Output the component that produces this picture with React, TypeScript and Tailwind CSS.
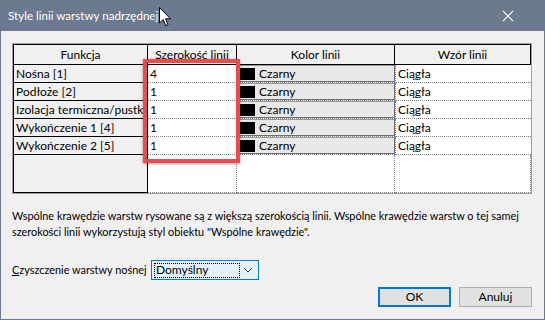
const rows = [
  { name: "Nośna [1]", width: "4" },
  { name: "Podłoże [2]", width: "1" },
  { name: "Izolacja termiczna/pustka [3]", width: "1" },
  { name: "Wykończenie 1 [4]", width: "1" },
  { name: "Wykończenie 2 [5]", width: "1" },
];

function CloseIcon() {
  return (
    <svg width="12" height="12" viewBox="0 0 12 12" className="block">
      <path d="M1 1 L11 11 M11 1 L1 11" stroke="#ffffff" strokeWidth="1.1" fill="none" />
    </svg>
  );
}

function Cursor() {
  return (
    <svg width="13" height="20" viewBox="0 0 13 20" className="absolute left-[158px] top-[7px]">
      <path
        d="M0.5 0.5 L0.5 16 L4.2 12.6 L6.8 18.6 L9 17.6 L6.5 11.8 L11.5 11.8 Z"
        fill="#ffffff"
        stroke="#000000"
        strokeWidth="1"
        strokeLinejoin="round"
      />
    </svg>
  );
}

function Chevron() {
  return (
    <svg width="10" height="6" viewBox="0 0 10 6" className="block">
      <path d="M1 1 L5 5 L9 1" stroke="#404040" strokeWidth="1" fill="none" />
    </svg>
  );
}

export default function App() {
  return (
    <div
      className="relative w-[545px] h-[320px] bg-[#f0f0f0] border border-[#6b7a8f] border-t-0 text-[12px] text-black flex flex-col overflow-hidden"
      style={{ fontFamily: 'Lato, "Liberation Sans", Arial, sans-serif' }}
    >
      {/* title bar */}
      <div className="h-[31px] bg-[#6b7a8f] flex items-center justify-between pl-[8px] pr-[31px] text-white text-[11.6px] -mx-px">
        <span>Style linii warstwy nadrzędnej</span>
        <CloseIcon />
      </div>
      <Cursor />

      <div className="flex flex-col px-[11px] pt-[12px]">
        {/* grid */}
        <div className="relative w-[520px] border border-[#a0a0a0] bg-white">
          <div className="grid grid-cols-[135px_89px_158px_136px]">
            <div className="h-[21px] bg-[#f0f0f0] border border-black flex items-center justify-center">Funkcja</div>
            <div className="h-[21px] bg-[#f0f0f0] border-y border-r border-black flex items-center justify-center">Szerokość linii</div>
            <div className="h-[21px] bg-[#f0f0f0] border-y border-r border-black flex items-center justify-center">Kolor linii</div>
            <div className="h-[21px] bg-[#f0f0f0] border-y border-r border-black flex items-center justify-center">Wzór linii</div>

            {rows.map((r) => (
              <div key={r.name} className="contents">
                <div className="h-[18px] bg-[#f0f0f0] border-x border-b border-black pl-[2px] flex items-center overflow-hidden whitespace-nowrap">
                  {r.name}
                </div>
                <div className="h-[18px] border-b border-dotted border-[#808080] pl-[2px] flex items-center">
                  {r.width}
                </div>
                <div className="h-[18px] border-b border-dotted border-[#808080] flex items-stretch">
                  <div className="flex-1 flex items-center gap-[4px] pl-[1px] bg-[#e8e8e8] border border-[#9a9a9a] border-b-[#6e6e6e] border-r-[#6e6e6e]">
                    <span className="w-[16px] h-[12px] bg-black" />
                    <span>Czarny</span>
                  </div>
                </div>
                <div className="h-[18px] border-b border-l border-dotted border-[#808080] pl-[2px] flex items-center">
                  Ciągła
                </div>
              </div>
            ))}

            <div className="h-[38px] bg-[#f0f0f0] border-x border-b border-black" />
            <div className="h-[38px] border-b border-r border-dotted border-[#808080]" />
            <div className="h-[38px] border-b border-r border-dotted border-[#808080]" />
            <div className="h-[38px] border-b border-r border-dotted border-[#808080]" />
          </div>

          {/* red highlight annotation */}
          <div className="absolute left-[130px] top-[15px] w-[97px] h-[104px] border-[4px] border-[#ee4a50] shadow-[0_1px_3px_rgba(0,0,0,0.35)] pointer-events-none" />
        </div>

        <p className="mt-[14px] leading-[16px] whitespace-nowrap text-[10.9px]">
          Wspólne krawędzie warstw rysowane są z większą szerokością linii. Wspólne krawędzie warstw o tej samej
          <br />
          szerokości linii wykorzystują styl obiektu "Wspólne krawędzie".
        </p>

        <div className="mt-[20px] flex items-center">
          <span className="w-[139px] whitespace-nowrap text-[10.9px]">
            <span className="underline">C</span>zyszczenie warstwy nośnej
          </span>
          <div className="w-[108px] h-[20px] border border-[#0078d7] bg-[#e5f1fb] flex items-center pl-[2px] pr-[5px]">
            <div className="w-[86px] h-[15px] border border-dotted border-black flex items-center pl-[1px]">
              Domyślny
            </div>
            <div className="flex-1 flex justify-end">
              <Chevron />
            </div>
          </div>
        </div>

        <div className="mt-[7px] flex justify-end gap-[8px] pr-[1px]">
          <button className="w-[73px] h-[20px] border-2 border-[#0078d7] bg-[#e1e1e1] flex items-center justify-center">
            OK
          </button>
          <button className="w-[73px] h-[20px] border border-[#adadad] bg-[#e1e1e1] flex items-center justify-center">
            Anuluj
          </button>
        </div>
      </div>
    </div>
  );
}
